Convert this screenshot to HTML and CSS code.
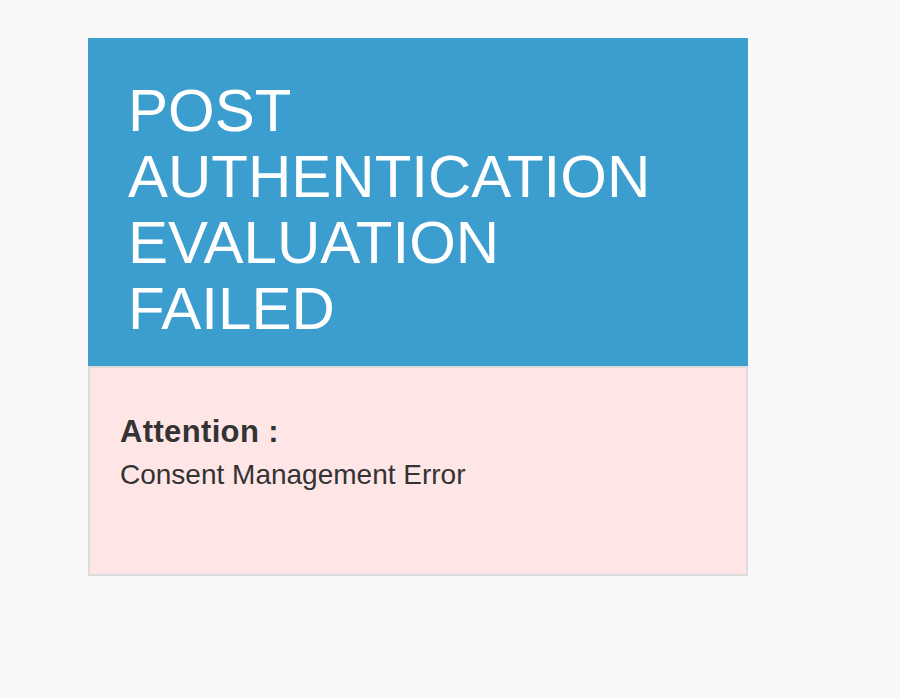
FILE: index.html
```html
<!DOCTYPE html>
<html lang="en">
<head>
<meta charset="utf-8">
<title>Post Authentication Evaluation Failed</title>
<link rel="stylesheet" href="styles.css">
</head>
<body>
<div class="card">
  <div class="card-header">
    <h1 class="title">POST<br>AUTHENTICATION<br>EVALUATION<br>FAILED</h1>
  </div>
  <div class="card-body">
    <div class="label">Attention :</div>
    <div class="message">Consent Management Error</div>
  </div>
</div>
</body>
</html>
```
FILE: styles.css
```css
html, body {
  margin: 0;
  padding: 0;
}
body {
  background: #f8f8f8;
  font-family: "Liberation Sans", Arial, Helvetica, sans-serif;
  color: #333;
  height: 698px;
}
.card {
  width: 660px;
  margin: 38px 0 0 88px;
}
.card-header {
  background: #3b9ecf;
  padding: 40px 40px 24px 40px;
}
.title {
  margin: 0;
  color: #fff;
  font-weight: normal;
  font-size: 60px;
  line-height: 66px;
}
.card-body {
  background: #ffe6e6;
  border: 2px solid #dcdcdc;
  padding: 42px 30px 78px 30px;
}
.label {
  font-weight: bold;
  font-size: 31px;
  line-height: 43px;
  letter-spacing: 0.35px;
}
.message {
  font-size: 28px;
  line-height: 43px;
}
```
